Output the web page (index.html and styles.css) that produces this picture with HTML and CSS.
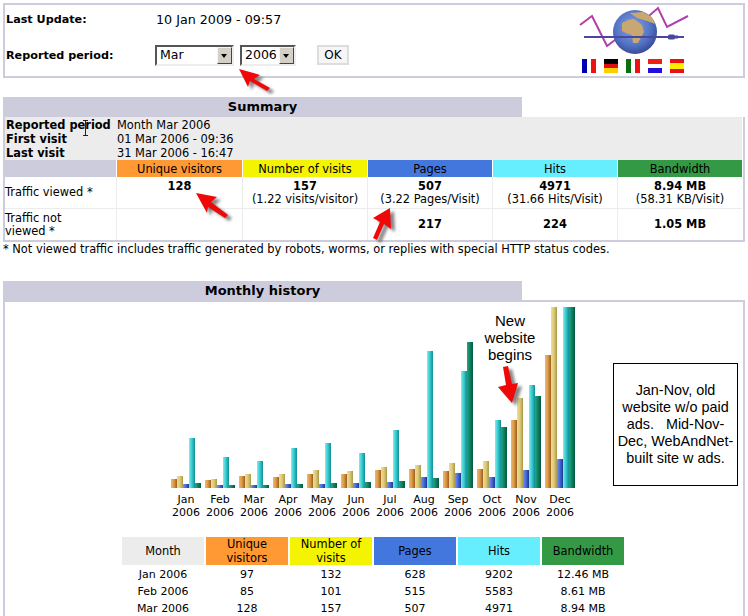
FILE: index.html
```html
<!DOCTYPE html>
<html lang="en">
<head>
<meta charset="utf-8">
<title>Statistics</title>
<link rel="stylesheet" href="styles.css">
</head>
<body>
<section class="panel top">
  <div class="period">
    <div class="period-row first">
      <span class="label">Last Update:</span><span class="updated">10 Jan 2009 - 09:57</span>
    </div>
    <div class="period-row second">
      <span class="label">Reported period:</span>
      <span class="select month"><span>Mar</span><i class="drop"></i></span>
      <span class="select year"><span>2006</span><i class="drop"></i></span>
      <button class="ok" type="button">OK</button>
    </div>
  </div>
  <svg class="logo" width="112" height="70" viewBox="0 0 112 70">
    <defs>
      <radialGradient id="sea" cx="0.45" cy="0.4" r="0.68">
        <stop offset="0" stop-color="#86a4e4"/>
        <stop offset="0.6" stop-color="#5272c4"/>
        <stop offset="1" stop-color="#2c3c88"/>
      </radialGradient>
    </defs>
    <polyline points="2,20 14,11 29,41 37,35 72,10 80,3 89,22 110,11" fill="none" stroke="#b040a8" stroke-width="2"/>
    <circle cx="57" cy="27" r="22" fill="url(#sea)"/>
    <path d="M44 18 L50 15 L56 14 L64 20 L66 27 L60 38 L55 38 L54 30 L48 28 L44 26 Z" fill="#c8a870"/>
    <path d="M52 8 L65 7 L74 12 L77 19 L69 16 L59 13 Z" fill="#c8a870"/>
    <path d="M6 32 H106" stroke="#4848a0" stroke-width="2"/>
    <rect x="90" y="29.5" width="7" height="5" rx="1.5" fill="#4848a0"/>
    <rect x="97" y="30.5" width="3" height="3" fill="#4848a0"/>
    <rect x="4" y="54" width="5" height="14" fill="#0000b0"/><rect x="9" y="54" width="4" height="14" fill="#fff"/><rect x="13" y="54" width="5" height="14" fill="#f01010"/>
    <rect x="26" y="54" width="14" height="5" fill="#000"/><rect x="26" y="59" width="14" height="4" fill="#e01010"/><rect x="26" y="63" width="14" height="5" fill="#f8d000"/>
    <rect x="48" y="54" width="5" height="14" fill="#087010"/><rect x="53" y="54" width="4" height="14" fill="#fff"/><rect x="57" y="54" width="5" height="14" fill="#f01010"/>
    <rect x="70" y="54" width="14" height="5" fill="#f02010"/><rect x="70" y="59" width="14" height="4" fill="#fff"/><rect x="70" y="63" width="14" height="5" fill="#2010d8"/>
    <rect x="92" y="54" width="14" height="4" fill="#e81010"/><rect x="92" y="58" width="14" height="6" fill="#f8f000"/><rect x="92" y="64" width="14" height="4" fill="#e81010"/>
  </svg>
</section>

<h2 class="band summary-band">Summary</h2>
<section class="panel summary">
  <table class="stats">
    <colgroup><col class="c-first"><col class="c-wide"><col class="c-num"><col class="c-num"><col class="c-num"><col class="c-num"></colgroup>
    <tr class="info"><th>Reported period</th><td colspan="5">Month Mar 2006</td></tr>
    <tr class="info"><th>First visit</th><td colspan="5">01 Mar 2006 - 09:36</td></tr>
    <tr class="info"><th>Last visit</th><td colspan="5">31 Mar 2006 - 16:47</td></tr>
    <tr class="heads">
      <td class="blank"></td>
      <td class="u">Unique visitors</td><td class="v">Number of visits</td><td class="p">Pages</td><td class="h">Hits</td><td class="k">Bandwidth</td>
    </tr>
    <tr class="data">
      <td class="rowname">Traffic viewed *</td>
      <td class="top-cell"><b>128</b></td>
      <td class="pair"><b>157</b><br>(1.22 visits/visitor)</td>
      <td class="pair"><b>507</b><br>(3.22 Pages/Visit)</td>
      <td class="pair"><b>4971</b><br>(31.66 Hits/Visit)</td>
      <td class="pair"><b>8.94 MB</b><br>(58.31 KB/Visit)</td>
    </tr>
    <tr class="data">
      <td class="rowname">Traffic not<br>viewed *</td>
      <td></td><td></td><td><b>217</b></td><td><b>224</b></td><td><b>1.05 MB</b></td>
    </tr>
  </table>
</section>
<p class="footnote">* Not viewed traffic includes traffic generated by robots, worms, or replies with special HTTP status codes.</p>

<h2 class="band">Monthly history</h2>
<section class="panel history">
  <div class="chart">
    <div class="month-col"><div class="bars"><i class="bu" style="height:9px"></i><i class="bv" style="height:12px"></i><i class="bp" style="height:4px"></i><i class="bh" style="height:50px"></i><i class="bk" style="height:5px"></i></div><span>Jan<br>2006</span></div>
    <div class="month-col"><div class="bars"><i class="bu" style="height:8px"></i><i class="bv" style="height:9px"></i><i class="bp" style="height:3px"></i><i class="bh" style="height:31px"></i><i class="bk" style="height:3px"></i></div><span>Feb<br>2006</span></div>
    <div class="month-col"><div class="bars"><i class="bu" style="height:12px"></i><i class="bv" style="height:14px"></i><i class="bp" style="height:3px"></i><i class="bh" style="height:27px"></i><i class="bk" style="height:3px"></i></div><span>Mar<br>2006</span></div>
    <div class="month-col"><div class="bars"><i class="bu" style="height:11px"></i><i class="bv" style="height:14px"></i><i class="bp" style="height:4px"></i><i class="bh" style="height:40px"></i><i class="bk" style="height:4px"></i></div><span>Apr<br>2006</span></div>
    <div class="month-col"><div class="bars"><i class="bu" style="height:14px"></i><i class="bv" style="height:18px"></i><i class="bp" style="height:4px"></i><i class="bh" style="height:45px"></i><i class="bk" style="height:5px"></i></div><span>May<br>2006</span></div>
    <div class="month-col"><div class="bars"><i class="bu" style="height:14px"></i><i class="bv" style="height:17px"></i><i class="bp" style="height:5px"></i><i class="bh" style="height:35px"></i><i class="bk" style="height:6px"></i></div><span>Jun<br>2006</span></div>
    <div class="month-col"><div class="bars"><i class="bu" style="height:18px"></i><i class="bv" style="height:21px"></i><i class="bp" style="height:6px"></i><i class="bh" style="height:58px"></i><i class="bk" style="height:7px"></i></div><span>Jul<br>2006</span></div>
    <div class="month-col"><div class="bars"><i class="bu" style="height:19px"></i><i class="bv" style="height:23px"></i><i class="bp" style="height:11px"></i><i class="bh" style="height:137px"></i><i class="bk" style="height:10px"></i></div><span>Aug<br>2006</span></div>
    <div class="month-col"><div class="bars"><i class="bu" style="height:17px"></i><i class="bv" style="height:25px"></i><i class="bp" style="height:15px"></i><i class="bh" style="height:117px"></i><i class="bk" style="height:146px"></i></div><span>Sep<br>2006</span></div>
    <div class="month-col"><div class="bars"><i class="bu" style="height:19px"></i><i class="bv" style="height:27px"></i><i class="bp" style="height:11px"></i><i class="bh" style="height:68px"></i><i class="bk" style="height:61px"></i></div><span>Oct<br>2006</span></div>
    <div class="month-col"><div class="bars"><i class="bu" style="height:68px"></i><i class="bv" style="height:90px"></i><i class="bp" style="height:18px"></i><i class="bh" style="height:103px"></i><i class="bk" style="height:92px"></i></div><span>Nov<br>2006</span></div>
    <div class="month-col"><div class="bars"><i class="bu" style="height:133px"></i><i class="bv" style="height:181px"></i><i class="bp" style="height:29px"></i><i class="bh" style="height:181px"></i><i class="bk" style="height:181px"></i></div><span>Dec<br>2006</span></div>
  </div>
  <table class="monthly">
    <tr class="heads">
      <td class="m">Month</td><td class="u">Unique visitors</td><td class="v">Number of visits</td><td class="p">Pages</td><td class="h">Hits</td><td class="k">Bandwidth</td>
    </tr>
    <tr class="first-row"><td>Jan 2006</td><td>97</td><td>132</td><td>628</td><td>9202</td><td>12.46 MB</td></tr>
    <tr><td>Feb 2006</td><td>85</td><td>101</td><td>515</td><td>5583</td><td>8.61 MB</td></tr>
    <tr><td>Mar 2006</td><td>128</td><td>157</td><td>507</td><td>4971</td><td>8.94 MB</td></tr>
  </table>
</section>

<div class="callout new-site">New<br>website<br>begins</div>
<div class="callout note"><span>Jan-Nov, old website w/o paid ads. &nbsp; Mid-Nov-Dec, WebAndNet-built site w ads.</span></div>

<svg class="marks" width="748" height="616" viewBox="0 0 748 616">
  <defs>
    <filter id="soft" x="-30%" y="-30%" width="160%" height="160%"><feGaussianBlur stdDeviation="1.8"/></filter>
    <polygon id="a1" points="239,69 260,75 254,79 270,88 267,91 250,81 248,87"/>
    <polygon id="a2" points="196,193 217,197 211,202 228,215 225,218 208,207 207,213"/>
    <polygon id="a3" points="390,208 391,229 384,224 377,240 373,238 380,222 373,218"/>
    <polygon id="a4" points="512,403 498,387 506,385 503,367 508,366 512,384 518,383"/>
  </defs>
  <g fill="#444" opacity="0.65" filter="url(#soft)" transform="translate(4 3)">
    <use href="#a1"/><use href="#a2"/><use href="#a3"/><use href="#a4"/>
  </g>
  <g fill="#f00808">
    <use href="#a1"/><use href="#a2"/><use href="#a3"/><use href="#a4"/>
  </g>
  <path d="M83 120.5 H88 M85.5 120.5 V135.5 M83 135.5 H88" fill="none" stroke="#222" stroke-width="1"/>
</svg>
</body>
</html>
```
FILE: styles.css
```css
html, body {
  margin: 0;
  height: 616px;
  overflow: hidden;
  background: #fff;
}
body {
  position: relative;
  padding: 3px 3px 0;
  font: 11.4px/14px "DejaVu Sans", Verdana, sans-serif;
  color: #000;
  box-sizing: border-box;
}
.panel {
  border: 2px solid #ccccdd;
  background: #fff;
}
.top {
  display: flex;
  justify-content: space-between;
  height: 71px;
}
.period { padding-left: 1px; }
.period-row {
  display: flex;
  align-items: center;
  height: 22px;
  margin-top: 10px;
}
.period-row.first { height: 28px; margin-top: 0; padding-top: 1px; }
.label { width: 150px; font-weight: bold; font-size: 11.2px; }
.second .label { width: 149px; padding-top: 2px; }
.updated { font-size: 12.7px; }
.select {
  display: flex;
  align-items: center;
  justify-content: space-between;
  height: 21px;
  box-sizing: border-box;
  border: 2px solid;
  border-color: #555 #eee #eee #555;
  background: #fff;
  font-size: 12.5px;
  padding-left: 3px;
}
.select.month { width: 79px; margin-right: 6px; }
.select.year { width: 56px; margin-right: 21px; }
.drop {
  position: relative;
  width: 15px;
  height: 17px;
  box-sizing: border-box;
  background: #d4d0c8;
  border: 1px solid;
  border-color: #f4f4f0 #444 #444 #f4f4f0;
}
.drop::after {
  content: "";
  position: absolute;
  left: 3px;
  top: 6px;
  border: 3.5px solid transparent;
  border-top: 4px solid #000;
  border-bottom: 0;
}
.ok {
  width: 32px;
  height: 20px;
  padding: 0;
  border: 2px solid #dddddd;
  background: #f6f6f6;
  font: 12px "DejaVu Sans", Verdana, sans-serif;
  color: #000;
}
.logo { margin-right: 53px; }

.band {
  width: 519px;
  height: 20px;
  margin: 0;
  background: #ccccdd;
  font-size: 13px;
  line-height: 20px;
  text-align: center;
  font-weight: bold;
}
.summary-band { margin-top: 19px; }
.summary { border-top: 0; }

.stats, .monthly {
  border-collapse: separate;
  border-spacing: 0;
  table-layout: fixed;
}
.stats { width: 737px; }
.c-first { width: 111px; }
.c-wide { width: 126px; }
.c-num { width: 125px; }
.stats td, .stats th { padding: 0; }
.info th, .info td {
  height: 14px;
  background: #ececec;
  text-align: left;
  font-weight: normal;
}
.stats .info td { padding-left: 1px; }
.stats .info th { font-weight: bold; padding-left: 1px; white-space: nowrap; }
.stats .info:first-child th, .stats .info:first-child td { padding-top: 1px; }
.stats .heads td {
  height: 17px;
  text-align: center;
  border-left: 1px solid #fff;
}
.stats .heads .blank { background: #ccccdd; border-left: 0; }
.u { background: #ff9933; }
.v { background: #f4f400; }
.p { background: #4477dd; }
.h { background: #66eeff; }
.k { background: #339944; }
.m { background: #ececec; }
.data td {
  height: 31px;
  text-align: center;
  border-left: 1px solid #ececec;
  border-top: 1px solid #ececec;
  vertical-align: middle;
  line-height: 13px;
}
.stats .data .rowname { text-align: left; border-left: 0; }
.stats tr:nth-child(5) td { border-top: 0; }
.stats .data .top-cell { vertical-align: top; padding-top: 3px; height: 28px; }
.stats .data .pair { padding-top: 1px; height: 30px; }

.footnote { margin: 0 0 26px; padding-top: 1px; height: 12px; line-height: 12px; white-space: nowrap; }

.history { height: 340px; border-top: 2px solid #ccccdd; margin-top: -1px; }
.chart {
  display: flex;
  margin-left: 164px;
  padding-top: 5px;
}
.month-col {
  width: 34px;
  text-align: center;
  font-size: 11px;
}
.month-col span { display: block; line-height: 13px; margin-top: 5px; }
.bars {
  display: flex;
  align-items: flex-end;
  height: 181px;
  padding: 0 2px;
}
.bars i { display: block; width: 6px; flex: none; }
.bu { background: linear-gradient(90deg, #f0b868, #d89848 50%, #9c5c18); }
.bv { background: linear-gradient(90deg, #f0e090, #dcc878 50%, #a89848); }
.bp { background: linear-gradient(90deg, #7898f0, #4468d8 50%, #1c3894); }
.bh { background: linear-gradient(90deg, #78f0f0, #38c8cc 50%, #108c94); }
.bk { background: linear-gradient(90deg, #20a880, #108060 50%, #005840); }

.monthly {
  margin: 18px 0 0 115px;
  border-spacing: 2px 0;
  width: 506px;
  font-size: 11px;
}
.monthly td {
  width: 82px;
  height: 17px;
  padding: 0;
  text-align: center;
  line-height: 14px;
  vertical-align: bottom;
}
.monthly .heads td { height: 28px; vertical-align: middle; font-size: 11.4px; }

.callout {
  position: absolute;
  font-family: "Liberation Sans", Arial, sans-serif;
  text-align: center;
  color: #000;
}
.new-site {
  left: 480px;
  top: 312px;
  width: 60px;
  font-size: 15px;
  line-height: 17px;
}
.note {
  left: 613px;
  top: 363px;
  width: 123px;
  height: 121px;
  border: 1px solid #000;
  background: #fff;
  font-size: 14.4px;
  line-height: 17px;
  display: flex;
  align-items: center;
}
.marks {
  position: absolute;
  left: 0;
  top: 0;
  pointer-events: none;
}
```
